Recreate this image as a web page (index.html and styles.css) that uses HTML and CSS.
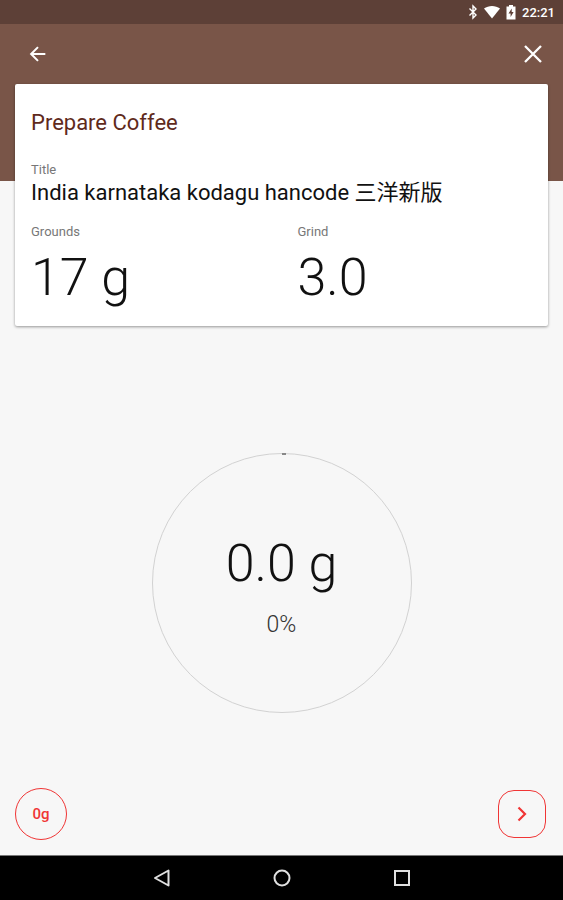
FILE: index.html
```html
<!DOCTYPE html>
<html lang="en">
<head>
    <meta charset="UTF-8">
    <meta name="viewport" content="width=device-width, initial-scale=1.0">
    <title>Prepare Coffee</title>
    <link rel="stylesheet" href="styles.css">
</head>
<body>

<div class="status-bar">
    <svg class="status-bluetooth" width="10" height="16" viewBox="0 0 10 16" aria-hidden="true">
        <path d="M1.5 4.5L8 11L5 14V2L8 5L1.5 11.5" fill="none" stroke="currentColor" stroke-width="1.4"/>
    </svg>
    <svg class="status-wifi" width="16" height="14" viewBox="0 0 16 14" aria-hidden="true">
        <path d="M0 3.5C4.500 0 11.500 0 16 3.500L8 13.500Z" fill="currentColor"/>
    </svg>
    <svg class="status-battery" width="10" height="16" viewBox="0 0 10 16" aria-hidden="true">
        <path d="M3 1H7V2.500H9.500V15.500H0.500V2.500H3ZM5.700 4.500L2.500 9.500H4.600V13L7.600 8H5.700Z" fill="currentColor" fill-rule="evenodd"/>
    </svg>
    <span class="clock">22:21</span>
</div>

<header class="toolbar">
    <button class="icon-btn" aria-label="Back">
        <svg width="24" height="24" viewBox="0 0 24 24" aria-hidden="true">
            <path d="M20 12H5.500M12 4.500L4.500 12L12 19.500" fill="none" stroke="currentColor" stroke-width="2.200"/>
        </svg>
    </button>
    <button class="icon-btn close-btn" aria-label="Close">
        <svg width="24" height="24" viewBox="0 0 24 24" aria-hidden="true">
            <path d="M4 4L20 20M20 4L4 20" fill="none" stroke="currentColor" stroke-width="2.300"/>
        </svg>
    </button>
</header>

<main class="content">
    <section class="card">
        <h1>Prepare Coffee</h1>
        <dl class="details">
            <div class="field field-wide">
                <dt>Title</dt>
                <dd class="name">India karnataka kodagu hancode <span lang="ja">三洋新版</span></dd>
            </div>
            <div class="field">
                <dt>Grounds</dt>
                <dd class="amount">17 g</dd>
            </div>
            <div class="field">
                <dt>Grind</dt>
                <dd class="amount">3.0</dd>
            </div>
        </dl>
    </section>

    <section class="scale">
        <div class="dial">
            <span class="dial-mark"></span>
            <span class="amount">0.0 g</span>
            <span class="percent">0%</span>
        </div>
    </section>

    <div class="actions">
        <button class="tare-btn" aria-label="Tare, 0g">0g</button>
        <button class="next-btn" aria-label="Next">
            <svg width="24" height="24" viewBox="0 0 24 24" aria-hidden="true">
                <path d="M8.500 5.500L15 12L8.500 18.500" fill="none" stroke="currentColor" stroke-width="2.200"/>
            </svg>
        </button>
    </div>
</main>

<nav class="nav-bar">
    <button aria-label="Back">
        <svg width="20" height="20" viewBox="0 0 20 20" aria-hidden="true">
            <path d="M16.500 2.500V17.500L3 10Z" fill="none" stroke="currentColor" stroke-width="2" stroke-linejoin="round"/>
        </svg>
    </button>
    <button aria-label="Home">
        <svg width="20" height="20" viewBox="0 0 20 20" aria-hidden="true">
            <circle cx="10" cy="10" r="7.500" fill="none" stroke="currentColor" stroke-width="2"/>
        </svg>
    </button>
    <button aria-label="Recent apps">
        <svg width="20" height="20" viewBox="0 0 20 20" aria-hidden="true">
            <rect x="3" y="3" width="14" height="14" fill="none" stroke="currentColor" stroke-width="2"/>
        </svg>
    </button>
</nav>

</body>
</html>
```
FILE: styles.css
```css
* {
    box-sizing: border-box;
}

body {
    font-family: Roboto, "Noto Sans CJK JP", sans-serif;
    margin: 0;
    min-height: 100vh;
    background-color: #f7f7f7;
    color: #111;
    display: flex;
    flex-direction: column;
}

button {
    font-family: inherit;
    padding: 0;
    border: none;
    background: none;
    cursor: pointer;
    display: flex;
    justify-content: center;
    align-items: center;
}

.status-bar {
    height: 24px;
    padding: 0 8px;
    background-color: #5d4037;
    color: #fff;
    display: flex;
    justify-content: flex-end;
    align-items: center;
}

.status-wifi {
    margin: 0 6px;
}

.clock {
    margin-left: 6px;
    font-size: 13px;
    font-weight: 500;
}

.toolbar {
    height: 157px;
    padding: 18px;
    background-color: #795548;
    display: flex;
    justify-content: space-between;
    align-items: flex-start;
}

.icon-btn {
    width: 40px;
    height: 24px;
    color: #fff;
}

.icon-btn:first-child svg {
    width: 22px;
}

.close-btn {
    width: 24px;
}

.content {
    flex: 1;
    margin-top: -97px;
    padding: 0 15px;
    display: flex;
    flex-direction: column;
}

.card {
    padding: 24px 16px 10px;
    background-color: #fff;
    border-radius: 2px;
    box-shadow: 0 1px 3px rgba(0, 0, 0, 0.4);
}

h1 {
    margin: 0;
    font-size: 22px;
    font-weight: 400;
    line-height: 30px;
    color: #5f2a1c;
}

.details {
    margin: 24px 0 0;
    display: grid;
    grid-template-columns: 1fr 1fr;
    row-gap: 16px;
    column-gap: 32px;
}

.field-wide {
    grid-column: 1 / -1;
}

dt {
    font-size: 13px;
    line-height: 16px;
    color: #777;
}

dd {
    margin: 0;
}

.name {
    font-size: 22px;
    line-height: 30px;
}

.amount {
    font-size: 52px;
    font-weight: 300;
    line-height: 76px;
}

.scale {
    flex: 1;
    padding: 92px 0 40px;
    display: flex;
    justify-content: center;
    align-items: center;
}

.dial {
    position: relative;
    width: 260px;
    height: 260px;
    padding-top: 8px;
    border: 1px solid #d2d2d2;
    border-radius: 50%;
    display: flex;
    flex-direction: column;
    justify-content: center;
    align-items: center;
}

.dial-mark {
    position: absolute;
    top: -1px;
    left: 50%;
    width: 4px;
    height: 2px;
    background-color: #888;
}

.percent {
    font-size: 23px;
    font-weight: 300;
    line-height: 46px;
    color: #333;
}

.actions {
    padding-bottom: 15px;
    display: flex;
    justify-content: space-between;
    align-items: center;
}

.tare-btn,
.next-btn {
    width: 52px;
    height: 52px;
    border: 1px solid #f03535;
    border-radius: 50%;
    color: #f03535;
    font-size: 15px;
    font-weight: 500;
}

.next-btn {
    width: 48px;
    height: 48px;
    margin-right: 2px;
    border-radius: 16px;
}

.nav-bar {
    height: 45px;
    background-color: #000;
    border-top: 1px solid #777;
    display: flex;
    justify-content: center;
    align-items: center;
    gap: 100px;
}

.nav-bar button {
    color: #e0e0e0;
}
```
